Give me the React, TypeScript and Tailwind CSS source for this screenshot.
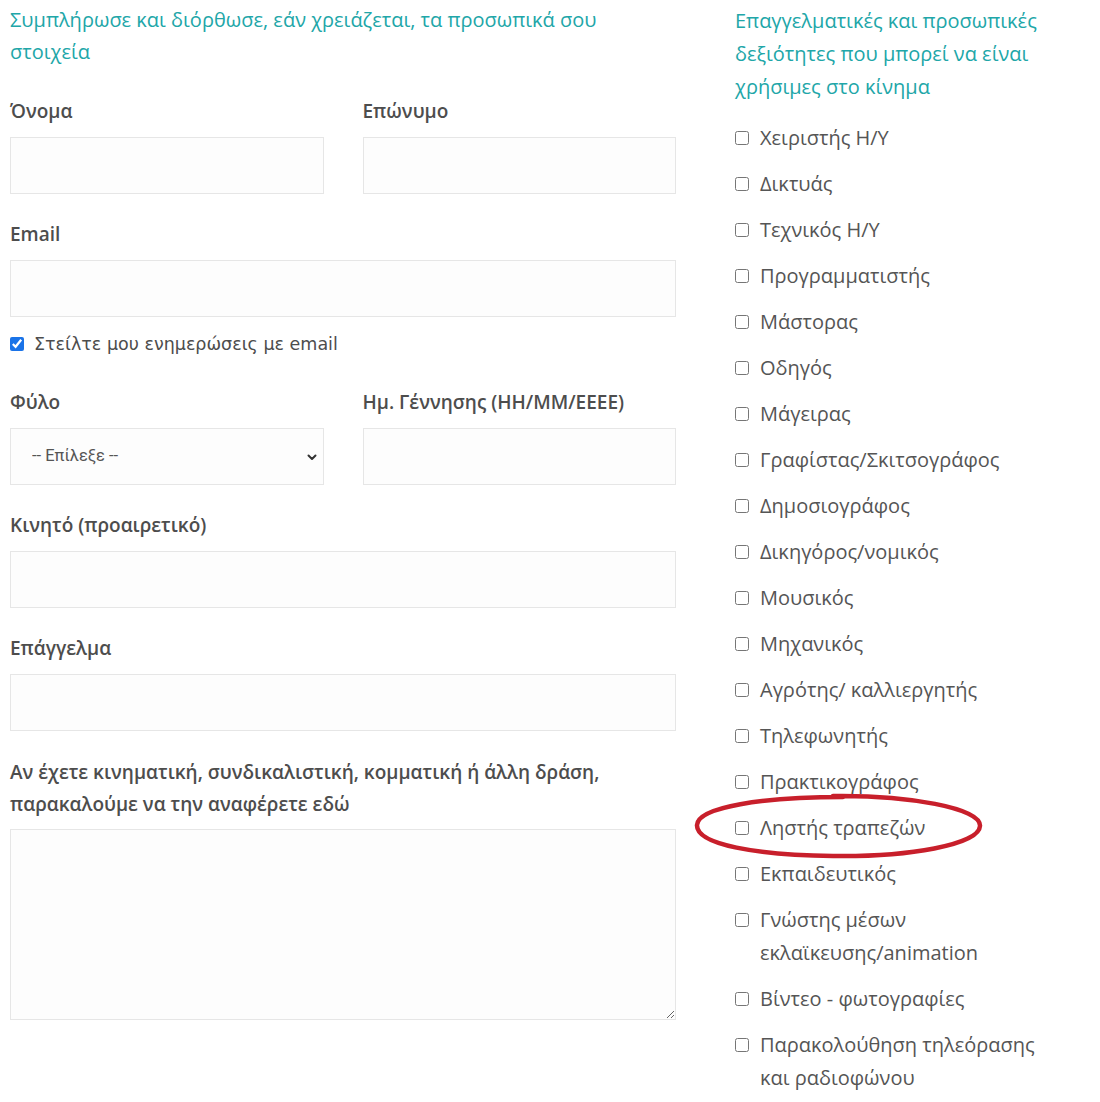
import React from "react"

const skills = [
  "Χειριστής Η/Υ",
  "Δικτυάς",
  "Τεχνικός Η/Υ",
  "Προγραμματιστής",
  "Μάστορας",
  "Οδηγός",
  "Μάγειρας",
  "Γραφίστας/Σκιτσογράφος",
  "Δημοσιογράφος",
  "Δικηγόρος/νομικός",
  "Μουσικός",
  "Μηχανικός",
  "Αγρότης/ καλλιεργητής",
  "Τηλεφωνητής",
  "Πρακτικογράφος",
  "Ληστής τραπεζών",
  "Εκπαιδευτικός",
  "Γνώστης μέσων εκλαϊκευσης/animation",
  "Βίντεο - φωτογραφίες",
  "Παρακολούθηση τηλεόρασης και ραδιοφώνου",
]

function Field({ label, children }: { label: string; children: React.ReactNode }) {
  return (
    <div className="mb-[25px]">
      <label className="block h-[30px] leading-[30px] mb-[11px] text-[19px] font-semibold text-[#4d4d4d] whitespace-nowrap">{label}</label>
      {children}
    </div>
  )
}

const inputCls = "block w-full h-[57px] border border-[#e6e6e6] bg-[#fdfdfd] outline-none"

export default function App() {
  return (
    <div className="min-h-screen bg-white font-['Open_Sans','Noto_Sans',sans-serif] flex pt-[4px]">
      <div className="ml-[10px] w-[666px]">
        <h2 className="text-[20px] leading-[32px] text-[#21a6a8] mb-[28px] pr-[60px]">
          Συμπλήρωσε και διόρθωσε, εάν χρειάζεται, τα προσωπικά σου στοιχεία
        </h2>
        <div className="grid grid-cols-2 gap-x-[39px]">
          <Field label="Όνομα"><input className={inputCls} /></Field>
          <Field label="Επώνυμο"><input className={inputCls} /></Field>
        </div>
        <div>
          <label className="block h-[30px] leading-[30px] mb-[11px] text-[19px] font-semibold text-[#4d4d4d]">Email</label>
          <input className={inputCls} />
        </div>
        <label className="flex items-center gap-[10px] mt-[12px] mb-[28px] h-[30px] text-[#4d4d4d] font-['DejaVu_Sans',sans-serif] text-[17.5px]">
          <input type="checkbox" defaultChecked className="w-[14px] h-[14px] m-0 accent-[#1a73e8]" />
          Στείλτε μου ενημερώσεις με email
        </label>
        <div className="grid grid-cols-2 gap-x-[39px]">
          <Field label="Φύλο">
            <div className="relative">
              <select className={inputCls + " appearance-none pl-[21px] text-[16.5px] text-[#555] font-['Liberation_Sans_Narrow','Roboto',sans-serif]"}>
                <option>-- Επίλεξε --</option>
              </select>
              <svg className="absolute right-[6px] top-[23px] w-[12px] h-[12px] pointer-events-none" viewBox="0 0 12 12" fill="none">
                <path d="M2.5 4.5 6 8l3.5-3.5" stroke="#333" strokeWidth="2" strokeLinecap="round" strokeLinejoin="round" />
              </svg>
            </div>
          </Field>
          <Field label="Ημ. Γέννησης (ΗΗ/ΜΜ/ΕΕΕΕ)"><input className={inputCls} /></Field>
        </div>
        <Field label="Κινητό (προαιρετικό)"><input className={inputCls} /></Field>
        <Field label="Επάγγελμα"><input className={inputCls} /></Field>
        <p className="text-[19px] leading-[32px] font-semibold text-[#4d4d4d] mb-[9px]">
          Αν έχετε κινηματική, συνδικαλιστική, κομματική ή άλλη δράση, παρακαλούμε να την αναφέρετε εδώ
        </p>
        <textarea className="block w-full h-[191px] border border-[#e6e6e6] bg-[#fdfdfd] outline-none" />
      </div>

      <div className="ml-[59px] w-[330px]">
        <h2 className="text-[20px] leading-[33px] text-[#21a6a8] mb-[18px] pr-[20px]">
          Επαγγελματικές και προσωπικές δεξιότητες που μπορεί να είναι χρήσιμες στο κίνημα
        </h2>
        <ul className="flex flex-col gap-[13px]">
          {skills.map((s) => (
            <li key={s} className="relative flex items-start text-[20px] leading-[33px] text-[#555]">
              <span className="h-[33px] flex items-center shrink-0">
                <input type="checkbox" className="w-[14px] h-[14px] m-0" />
              </span>
              <span className="ml-[11px]">{s}</span>
              {s === "Ληστής τραπεζών" && (
                <svg className="absolute left-[-42px] top-[-18px] w-[292px] h-[66px] pointer-events-none overflow-visible" viewBox="0 0 292 66" fill="none">
                  <path
                    d="M140 3C215 2 288 15 287 33C286 52 215 64 140 63C65 62 3 52 4 32C5 14 70 4 150 4"
                    stroke="#c81f2b"
                    strokeWidth="4.5"
                    strokeLinecap="round"
                  />
                </svg>
              )}
            </li>
          ))}
        </ul>
      </div>
    </div>
  )
}
